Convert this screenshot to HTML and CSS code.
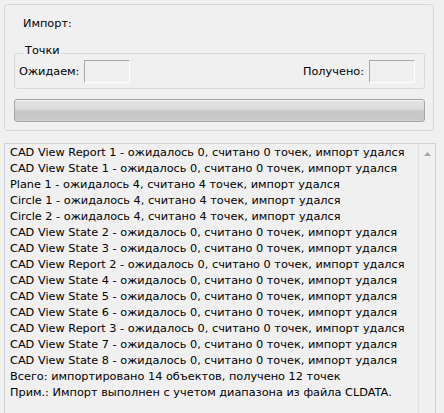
FILE: index.html
```html
<!DOCTYPE html>
<html lang="ru">
<head>
<meta charset="utf-8">
<title>Импорт</title>
<link rel="stylesheet" href="styles.css">
</head>
<body>
<div class="panel">
  <div class="title">Импорт:</div>
  <div class="group">
    <div class="legend">Точки</div>
    <div class="row">
      <div class="field"><span>Ожидаем:</span><span class="box"></span></div>
      <div class="field"><span>Получено:</span><span class="box"></span></div>
    </div>
  </div>
  <div class="progress"></div>
</div>
<div class="list">
  <div class="lines">
    <div>CAD View Report 1 - ожидалось 0, считано 0 точек, импорт удался</div>
    <div>CAD View State 1 - ожидалось 0, считано 0 точек, импорт удался</div>
    <div>Plane 1 - ожидалось 4, считано 4 точек, импорт удался</div>
    <div>Circle 1 - ожидалось 4, считано 4 точек, импорт удался</div>
    <div>Circle 2 - ожидалось 4, считано 4 точек, импорт удался</div>
    <div>CAD View State 2 - ожидалось 0, считано 0 точек, импорт удался</div>
    <div>CAD View State 3 - ожидалось 0, считано 0 точек, импорт удался</div>
    <div>CAD View Report 2 - ожидалось 0, считано 0 точек, импорт удался</div>
    <div>CAD View State 4 - ожидалось 0, считано 0 точек, импорт удался</div>
    <div>CAD View State 5 - ожидалось 0, считано 0 точек, импорт удался</div>
    <div>CAD View State 6 - ожидалось 0, считано 0 точек, импорт удался</div>
    <div>CAD View Report 3 - ожидалось 0, считано 0 точек, импорт удался</div>
    <div>CAD View State 7 - ожидалось 0, считано 0 точек, импорт удался</div>
    <div>CAD View State 8 - ожидалось 0, считано 0 точек, импорт удался</div>
    <div>Всего: импортировано 14 объектов, получено 12 точек</div>
    <div>Прим.: Импорт выполнен с учетом диапазона из файла CLDATA.</div>
  </div>
  <div class="scrollbar">
    <svg class="arrow" width="9" height="6" viewBox="0 0 9 6"><path d="M1 5 L4.5 1 L8 5 Z" fill="#a6a6a6"/></svg>
  </div>
</div>
</body>
</html>
```
FILE: styles.css
```css
html, body {
  margin: 0;
  padding: 0;
  background: #f0f0f0;
  overflow: hidden;
}
body {
  width: 444px;
  height: 413px;
  font-family: "DejaVu Sans", sans-serif;
  font-size: 11.3px;
  line-height: 16px;
  color: #000;
}
.panel {
  margin: 4px 10px 0 4px;
  height: 127px;
  box-sizing: border-box;
  border: 1px solid #d5dadf;
  border-radius: 3px;
  padding: 11px 8px 7px 9px;
}
.title {
  padding-left: 9px;
  height: 16px;
}
.group {
  margin-top: 21px;
  border: 1px solid #d5dadf;
  border-radius: 3px;
  padding: 0 9px 5px 4px;
}
.legend {
  margin: -10px 0 0 4px;
  width: fit-content;
  padding: 0 2px;
  line-height: 14px;
  background: #f0f0f0;
}
.row {
  margin-top: 2px;
  display: flex;
  justify-content: space-between;
  align-items: center;
  height: 23px;
}
.field {
  display: flex;
  align-items: center;
  gap: 5px;
}
.box {
  width: 46px;
  height: 23px;
  box-sizing: border-box;
  border: 1px solid;
  border-color: #a9a9a9 #fff #fff #a9a9a9;
  background: #f0f0f0;
}
.progress {
  margin-top: 10px;
  height: 23px;
  box-sizing: border-box;
  border: 1px solid #a6a6a6;
  border-radius: 3px;
  background: linear-gradient(#f8f8f8 0, #e2e2e2 8%, #d9d9d9 45%, #c6c6c6 52%, #c7c7c7 90%, #d0d0d0 100%);
}
.list {
  margin: 12px 8px 0 4px;
  height: 280px;
  border: 1px solid #cfd3d7;
  display: flex;
}
.lines {
  flex: 1;
  padding: 1px 0 0 5px;
  white-space: nowrap;
  overflow: hidden;
}
.scrollbar {
  width: 16px;
  border-left: 1px solid #e2e2e2;
  display: flex;
  justify-content: center;
  padding-top: 7px;
  align-items: flex-start;
}
```
